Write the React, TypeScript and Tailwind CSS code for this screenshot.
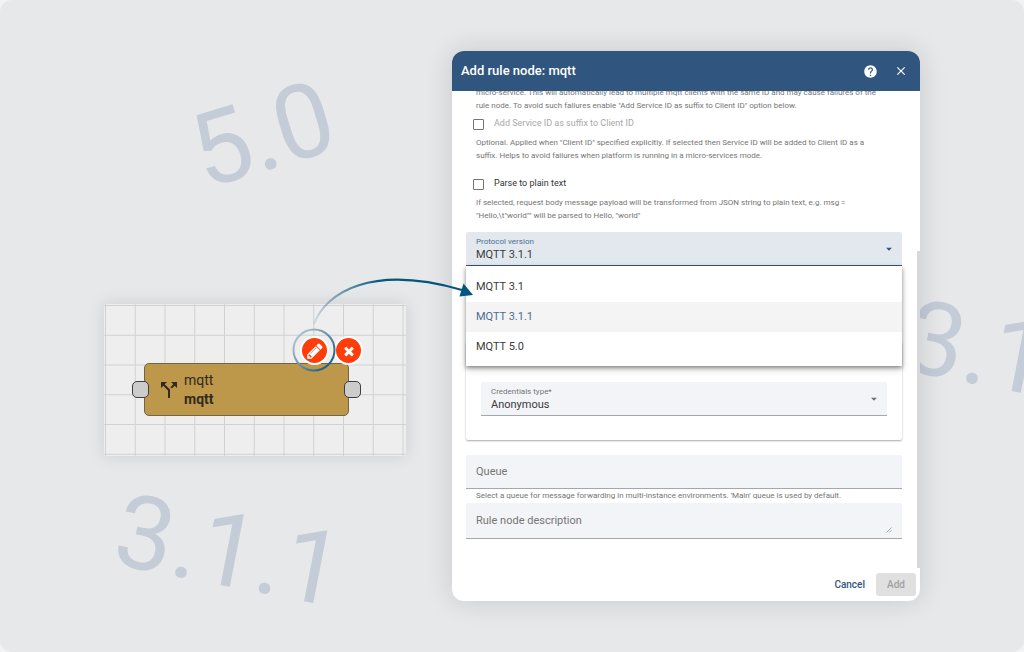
import { useState, type ReactNode } from "react";
import { MdArrowDropDown, MdCallSplit, MdClose, MdHelp } from "react-icons/md";

const versions = ["MQTT 3.1", "MQTT 3.1.1", "MQTT 5.0"];

function Watermarks() {
  const base = "absolute text-[103px] leading-none text-[#c4ccd8] whitespace-nowrap";
  return (
    <div aria-hidden="true" className="pointer-events-none absolute inset-0 select-none">
      <span className={`${base} left-[191px] top-[83px] -rotate-[17deg]`}>5.0</span>
      <span className={`${base} left-[115px] top-[499px] rotate-[11deg]`}>3.1.1</span>
      <span className={`${base} left-[906px] top-[305px] rotate-[11deg]`}>3.1.1</span>
    </div>
  );
}

function RuleChain() {
  return (
    <section
      aria-label="Rule chain"
      className="relative z-10 mt-[253px] h-[152px] w-[302px] shrink-0 bg-[#eeeeee] shadow-[0_0_16px_rgba(0,0,0,0.12)]"
    >
      <svg className="absolute inset-0 h-full w-full" aria-hidden="true">
        <defs>
          <pattern id="grid" x="1" y="1" width="29.75" height="29.75" patternUnits="userSpaceOnUse">
            <path d="M0.5 0V29.75M0 0.5H29.75" stroke="#cfd1d2" strokeWidth="1" fill="none" />
          </pattern>
        </defs>
        <rect width="100%" height="100%" fill="url(#grid)" />
      </svg>

      <div className="absolute left-[40px] top-[59px] flex h-[53px] w-[205px] items-center gap-[3px] rounded-[5px] border border-[#716548] bg-[#bd974a] pl-3 text-[#312b1f]">
        <MdCallSplit className="size-6" />
        <div className="text-sm leading-[19px]">
          <div>mqtt</div>
          <div className="font-bold">mqtt</div>
        </div>
        <span className="absolute -left-[13px] top-[17px] size-[17px] rounded-[5px] border border-[#3f3f3f] bg-[#cccccc]" />
        <span className="absolute -right-[13px] top-[17px] size-[17px] rounded-[5px] border border-[#3f3f3f] bg-[#cccccc]" />
      </div>

      <button
        aria-label="Edit node"
        className="absolute left-[196px] top-[32px] flex size-[29px] items-center justify-center rounded-full border-2 border-white bg-[#ff3d0a] text-white"
      >
        <svg viewBox="0 0 1792 1792" className="size-[18px]" fill="currentColor">
          <path d="M491 1536l91-91-235-235-91 91v107h128v128h107zm523-928q0-22-22-22-10 0-17 7l-542 542q-7 7-7 17 0 22 22 22 10 0 17-7l542-542q7-7 7-17zm-54-192l416 416-832 832h-416v-416zm683 96q0 53-37 90l-166 166-416-416 166-165q36-38 90-38 53 0 91 38l235 234q37 39 37 91z" />
        </svg>
      </button>
      <button
        aria-label="Delete node"
        className="absolute left-[230px] top-[32px] flex size-[29px] items-center justify-center rounded-full border-2 border-white bg-[#ff3d0a] text-white"
      >
        <svg viewBox="0 0 1792 1792" className="size-[14px]" fill="currentColor">
          <path d="M1490 1322q0 40-28 68l-136 136q-28 28-68 28t-68-28l-294-294-294 294q-28 28-68 28t-68-28l-136-136q-28-28-28-68t28-68l294-294-294-294q-28-28-28-68t28-68l136-136q28-28 68-28t68 28l294 294 294-294q28-28 68-28t68 28l136 136q28 28 28 68t-28 68l-294 294 294 294q28 28 28 68z" />
        </svg>
      </button>

      <svg
        aria-hidden="true"
        className="pointer-events-none absolute left-0 top-0 z-10 overflow-visible"
        width="302"
        height="152"
        fill="none"
      >
        <defs>
          <linearGradient id="ring" x1="190" y1="30" x2="230" y2="66" gradientUnits="userSpaceOnUse">
            <stop offset="0.1" stopColor="#a9c0cc" />
            <stop offset="0.9" stopColor="#1a5b80" />
          </linearGradient>
          <linearGradient id="arrow" x1="210" y1="20" x2="290" y2="-20" gradientUnits="userSpaceOnUse">
            <stop offset="0" stopColor="#04557f" stopOpacity="0.1" />
            <stop offset="0.9" stopColor="#04557f" />
          </linearGradient>
        </defs>
        <circle cx="210" cy="46" r="20.5" stroke="url(#ring)" strokeWidth="2" />
        <path d="M210 20C222 -12 268 -40 358 -14" stroke="url(#arrow)" strokeWidth="2.2" />
        <path d="M359.5 -20.5L369 -9L355.5 -7.5Z" fill="#04557f" />
      </svg>
    </section>
  );
}

function Hint({ id, children }: { id?: string; children: ReactNode }) {
  return (
    <p id={id} className="pl-2.5 pr-4 text-[8px] leading-[13px] text-[#757575]">
      {children}
    </p>
  );
}

function CheckRow({ label, disabled }: { label: string; disabled?: boolean }) {
  return (
    <label
      className={`flex h-6 items-center gap-2.5 pl-[7px] text-[9px] ${disabled ? "text-[#a8a8a8]" : "text-[#333333]"}`}
    >
      <input
        type="checkbox"
        disabled={disabled}
        className="size-[11px] appearance-none rounded-[1px] border border-[#757575] bg-white checked:bg-[#305680]"
      />
      {label}
    </label>
  );
}

function SelectField({
  id,
  label,
  value,
  options,
  active,
  onChange,
}: {
  id: string;
  label: string;
  value: string;
  options: string[];
  active?: boolean;
  onChange?: (value: string) => void;
}) {
  return (
    <div
      className={`relative flex h-[34px] flex-col justify-center rounded-t-[2px] border-b px-2.5 ${
        active ? "border-[#305680] bg-[#e3e8ef]" : "border-[#a5a7aa] bg-[#f3f4f8]"
      }`}
    >
      <label htmlFor={id} className={`text-[8px] leading-[12px] ${active ? "text-[#4a6d96]" : "text-[#757575]"}`}>
        {label}
      </label>
      <select
        id={id}
        value={value}
        onChange={(e) => onChange?.(e.target.value)}
        className="appearance-none bg-transparent text-[11px] leading-[14px] text-[#3a3a3a] outline-none"
      >
        {options.map((o) => (
          <option key={o}>{o}</option>
        ))}
      </select>
      <MdArrowDropDown
        className={`pointer-events-none absolute right-1.5 top-[10px] size-[14px] ${active ? "text-[#305680]" : "text-[#6b6b6b]"}`}
      />
    </div>
  );
}

function RuleNodeDialog() {
  const [version, setVersion] = useState("MQTT 3.1.1");
  return (
    <div
      role="dialog"
      aria-labelledby="dialog-title"
      className="relative z-0 flex min-w-0 flex-1 flex-col overflow-hidden rounded-xl bg-white shadow-[0_0_28px_rgba(0,0,0,0.14)]"
    >
      <header className="flex h-10 items-center bg-[#305680] pl-[9px] pr-3 text-white">
        <h1 id="dialog-title" className="flex-1 text-[13px] font-medium">
          Add rule node: mqtt
        </h1>
        <button aria-label="Help" className="mr-4">
          <MdHelp className="size-[15px]" />
        </button>
        <button aria-label="Close">
          <MdClose className="size-[14px]" />
        </button>
      </header>

      <div className="flex overflow-hidden">
        <form className="min-w-0 flex-1 pb-[29px] pl-3.5 pr-[15px]">
          <div className="-mt-[5px] flex flex-col gap-2.5">
            <div>
              <Hint>
                micro-service. This will automatically lead to multiple mqtt clients with the same ID and may cause
                failures of the rule node. To avoid such failures enable "Add Service ID as suffix to Client ID" option
                below.
              </Hint>
              <CheckRow label="Add Service ID as suffix to Client ID" disabled />
              <Hint>
                Optional. Applied when "Client ID" specified explicitly. If selected then Service ID will be added to
                Client ID as a suffix. Helps to avoid failures when platform is running in a micro-services mode.
              </Hint>
            </div>
            <div>
              <CheckRow label="Parse to plain text" />
              <Hint>
                If selected, request body message payload will be transformed from JSON string to plain text, e.g. msg =
                "Hello,\t"world"" will be parsed to Hello, "world"
              </Hint>
            </div>
            <div className="relative">
              <SelectField
                id="protocol"
                label="Protocol version"
                value={version}
                options={versions}
                active
                onChange={setVersion}
              />
              <div
                role="listbox"
                aria-label="Protocol version"
                className="absolute inset-x-0 top-full z-10 flex flex-col bg-white pb-1 pt-1.5 shadow-[0_2px_4px_rgba(0,0,0,0.4),0_3px_8px_rgba(0,0,0,0.15)]"
              >
                {versions.map((v) => (
                  <button
                    key={v}
                    type="button"
                    role="option"
                    aria-selected={v === version}
                    onClick={() => setVersion(v)}
                    className={`h-[30px] px-2.5 text-left text-[11px] ${
                      v === version ? "bg-[#f4f4f5] text-[#4a6d96]" : "text-[#3a3a3a]"
                    }`}
                  >
                    {v}
                  </button>
                ))}
              </div>
            </div>
          </div>

          <div className="mt-[76px] rounded-[2px] px-[15px] pb-6 pt-10 shadow-[0_1px_2px_rgba(0,0,0,0.35)]">
            <SelectField id="credentials" label="Credentials type*" value="Anonymous" options={["Anonymous"]} />
          </div>

          <div className="mt-[15px]">
            <input
              aria-label="Queue"
              aria-describedby="queue-hint"
              placeholder="Queue"
              className="block h-[34px] w-full rounded-t-[2px] border-b border-[#a5a7aa] bg-[#f3f4f8] px-2.5 text-[11px] outline-none placeholder:text-[#757575]"
            />
            <Hint id="queue-hint">
              Select a queue for message forwarding in multi-instance environments. 'Main' queue is used by default.
            </Hint>
          </div>
          <div className="relative mt-px">
            <textarea
              aria-label="Rule node description"
              placeholder="Rule node description"
              className="block h-9 w-full resize-none rounded-t-[2px] border-b border-[#a5a7aa] bg-[#f3f4f8] px-2.5 py-2.5 text-[11px] leading-[15px] outline-none placeholder:text-[#757575]"
            />
            <svg
              aria-hidden="true"
              viewBox="0 0 6 6"
              className="pointer-events-none absolute bottom-1.5 right-2.5 size-1.5"
              stroke="#8a8a8a"
              strokeWidth="0.7"
            >
              <path d="M0.5 5.5L5.5 0.5M3.2 5.5L5.5 3.2" />
            </svg>
          </div>
        </form>
        <div className="mt-[160px] w-[3px] shrink-0 bg-[#d6d8d9]" />
      </div>

      <footer className="flex items-center justify-end gap-[11px] pb-[5px] pr-1 pt-[5px] text-[10px] font-medium">
        <button className="text-[#305680]">Cancel</button>
        <button disabled className="h-[23px] w-10 rounded-[3px] bg-[#e0e0e0] text-[#a0a0a0]">
          Add
        </button>
      </footer>
    </div>
  );
}

export default function App() {
  return (
    <div className="min-h-screen bg-[#f2f3f4] font-['Roboto',sans-serif]">
      <main className="relative flex min-h-screen items-start gap-[46px] overflow-hidden rounded-xl bg-[#e6e8ea] px-[104px] py-[51px]">
        <Watermarks />
        <RuleChain />
        <RuleNodeDialog />
      </main>
    </div>
  );
}
